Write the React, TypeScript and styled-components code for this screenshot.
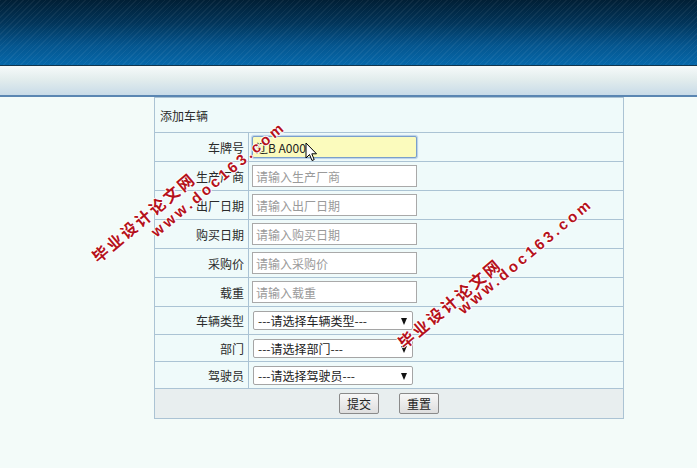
import React from "react";
import styled, { createGlobalStyle } from "styled-components";

const GlobalStyle = createGlobalStyle`
  html, body {
    margin: 0;
    padding: 0;
    background: #f3fbf9;
    font-family: "Noto Sans CJK SC", "Liberation Sans", sans-serif;
  }
`;

const Page = styled.div`
  position: relative;
  width: 697px;
  height: 468px;
  overflow: hidden;
  background: #f3fbf9;
`;

const Header = styled.div`
  height: 65px;
  border-bottom: 1px solid #12354c;
  background:
    repeating-linear-gradient(
      135deg,
      rgba(255, 255, 255, 0.05) 0px,
      rgba(255, 255, 255, 0.05) 1px,
      transparent 1px,
      transparent 4px
    ),
    linear-gradient(to bottom, #011f35 0%, #02355a 35%, #05568f 70%, #0668aa 100%);
`;

const NavBar = styled.div`
  height: 29px;
  border-bottom: 2px solid #5a86b2;
  background: linear-gradient(to bottom, #f6fafa 0%, #e3eded 45%, #c8dbe8 100%);
`;

const Content = styled.div`
  padding-left: 154px;
`;

const FormTable = styled.table`
  width: 470px;
  border-collapse: collapse;
  background: #effafa;
  font-size: 12px;
  color: #2a2a2a;

  td {
    border: 1px solid #abc3d4;
    padding: 0;
  }
`;

const TitleCell = styled.td`
  height: 34px;
  padding-left: 5px !important;
  text-align: left;
`;

const LabelCell = styled.td<{ $h: number }>`
  width: 89px;
  height: ${(p) => p.$h}px;
  text-align: right;
  padding-right: 4px !important;
  white-space: nowrap;
`;

const FieldCell = styled.td`
  padding-left: 3px !important;
`;

const TextInput = styled.input<{ $focus?: boolean }>`
  display: block;
  box-sizing: border-box;
  width: 165px;
  height: 22px;
  margin: 0;
  padding: 0 3px;
  font-family: "Noto Sans CJK SC", "Liberation Sans", sans-serif;
  font-size: 12px;
  color: #222;
  border: 1px solid ${(p) => (p.$focus ? "#7a9fcb" : "#a9a9a9")};
  border-radius: ${(p) => (p.$focus ? "2px" : "0")};
  background: ${(p) => (p.$focus ? "#fbfbbd" : "#fff")};
  box-shadow: ${(p) => (p.$focus ? "0 0 1px 1px #b8cfe8" : "none")};
  outline: none;

  &::placeholder {
    color: #9a9a9a;
  }
`;

const SelectBox = styled.div`
  position: relative;
  box-sizing: border-box;
  width: 160px;
  height: 19px;
  margin-left: 1px;
  padding-left: 4px;
  border: 1px solid #a5a5a5;
  border-radius: 2px;
  background: #fff;
  font-size: 12px;
  line-height: 17px;
  color: #222;
`;

const Arrow = styled.span`
  position: absolute;
  right: 5px;
  top: 6px;
  width: 0;
  height: 0;
  border-left: 3.5px solid transparent;
  border-right: 3.5px solid transparent;
  border-top: 7px solid #111;
`;

const ButtonCell = styled.td`
  height: 29px;
  background: #e8eeef;
  text-align: center;
`;

const Button = styled.button`
  height: 21px;
  width: 40px;
  margin: 0 10px;
  padding: 0;
  font-family: "Noto Sans CJK SC", "Liberation Sans", sans-serif;
  font-size: 12px;
  color: #222;
  border: 1px solid #8a8a8a;
  border-radius: 2px;
  background: linear-gradient(to bottom, #f7f7f7, #dedede);
`;

const Watermark = styled.div<{ $x: number; $y: number; $size: number; $spacing: number }>`
  position: absolute;
  left: ${(p) => p.$x}px;
  top: ${(p) => p.$y}px;
  transform: rotate(-40deg);
  transform-origin: left center;
  font-family: "Liberation Sans", "Noto Sans CJK SC", sans-serif;
  font-weight: bold;
  font-size: ${(p) => p.$size}px;
  line-height: 1;
  letter-spacing: ${(p) => p.$spacing}px;
  white-space: nowrap;
  color: #b5121b;
  text-shadow: 1px 0 0 #fff, -1px 0 0 #fff, 0 1px 0 #fff, 0 -1px 0 #fff;
  pointer-events: none;
`;

const Pointer = styled.svg`
  position: absolute;
  left: 305px;
  top: 142px;
`;

const inputRows = [
  { label: "生产厂商", placeholder: "请输入生产厂商" },
  { label: "出厂日期", placeholder: "请输入出厂日期" },
  { label: "购买日期", placeholder: "请输入购买日期" },
  { label: "采购价", placeholder: "请输入采购价" },
  { label: "载重", placeholder: "请输入载重" },
];

const selectRows = [
  { label: "车辆类型", text: "---请选择车辆类型---", h: 27 },
  { label: "部门", text: "---请选择部门---", h: 26 },
  { label: "驾驶员", text: "---请选择驾驶员---", h: 26 },
];

function App() {
  return (
    <Page>
      <GlobalStyle />
      <Header />
      <NavBar />
      <Content>
        <FormTable>
          <tbody>
            <tr>
              <TitleCell colSpan={2}>添加车辆</TitleCell>
            </tr>
            <tr>
              <LabelCell $h={28}>车牌号</LabelCell>
              <FieldCell>
                <TextInput $focus defaultValue="辽B A000" />
              </FieldCell>
            </tr>
            {inputRows.map((item, index) => (
              <tr key={index}>
                <LabelCell $h={28}>{item.label}</LabelCell>
                <FieldCell>
                  <TextInput placeholder={item.placeholder} />
                </FieldCell>
              </tr>
            ))}
            {selectRows.map((item, index) => (
              <tr key={"s" + index}>
                <LabelCell $h={item.h}>{item.label}</LabelCell>
                <FieldCell>
                  <SelectBox>
                    {item.text}
                    <Arrow />
                  </SelectBox>
                </FieldCell>
              </tr>
            ))}
            <tr>
              <ButtonCell colSpan={2}>
                <Button>提交</Button>
                <Button>重置</Button>
              </ButtonCell>
            </tr>
          </tbody>
        </FormTable>
      </Content>

      <Watermark $x={95} $y={252} $size={16} $spacing={2.5}>
        毕业设计论文网
      </Watermark>
      <Watermark $x={153} $y={226} $size={15} $spacing={3.2}>
        www.doc163.com
      </Watermark>
      <Watermark $x={401} $y={338} $size={16} $spacing={2.5}>
        毕业设计论文网
      </Watermark>
      <Watermark $x={460} $y={303} $size={15} $spacing={3.2}>
        www.doc163.com
      </Watermark>

      <Pointer width="13" height="20" viewBox="0 0 13 20">
        <path
          d="M1 1 L1 16 L4.5 12.5 L7 18.5 L9.2 17.6 L6.8 11.8 L11.5 11.8 Z"
          fill="#fff"
          stroke="#000"
          strokeWidth="1"
        />
      </Pointer>
    </Page>
  );
}

export default App;
